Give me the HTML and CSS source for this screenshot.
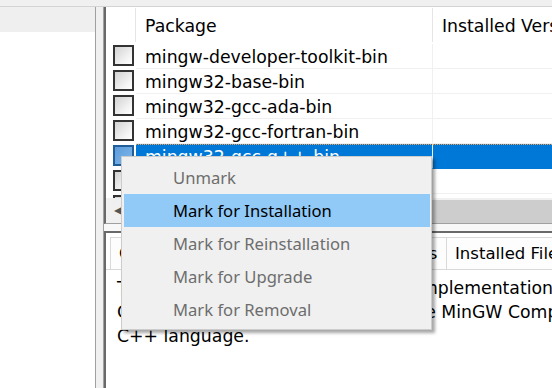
FILE: index.html
```html
<!DOCTYPE html>
<html>
<head>
<meta charset="utf-8">
<link rel="stylesheet" href="styles.css">
</head>
<body>
<div class="top"><span class="toplabel">Package</span></div>
<div class="main">
  <div class="left"><div class="leftsel"></div></div>
  <div class="vsplit"></div>
  <div class="right">
    <div class="list">
      <div class="hdr">
        <div class="c0"></div>
        <div class="c1">Package</div>
        <div class="c2">Installed Version</div>
      </div>
      <div class="rows">
        <div class="row"><div class="c0"><span class="cb"></span></div><div class="c1">mingw-developer-toolkit-bin</div><div class="c2"></div></div>
        <div class="row"><div class="c0"><span class="cb"></span></div><div class="c1">mingw32-base-bin</div><div class="c2"></div></div>
        <div class="row"><div class="c0"><span class="cb"></span></div><div class="c1">mingw32-gcc-ada-bin</div><div class="c2"></div></div>
        <div class="row"><div class="c0"><span class="cb"></span></div><div class="c1">mingw32-gcc-fortran-bin</div><div class="c2"></div></div>
        <div class="row sel"><div class="c0"><span class="cb"></span></div><div class="c1">mingw32-gcc-g++-bin</div><div class="c2"></div></div>
        <div class="row"><div class="c0"><span class="cb"></span></div><div class="c1">mingw32-gcc-objc-bin</div><div class="c2"></div></div>
        <div class="row"><div class="c0"><span class="cb"></span></div><div class="c1">msys-base-bin</div><div class="c2"></div></div>
      </div>
      <div class="hscroll"><div class="arrow">&#9664;</div><div class="thumb"></div></div>
    </div>
    <div class="hsplit"></div>
    <div class="details">
      <div class="tabs">
        <div class="tab t1">General</div>
        <div class="tab t2">Description</div>
        <div class="tab t3">Dependencies</div>
        <div class="tab t4">Installed Files</div>
        <div class="tab t5">Versions</div>
      </div>
      <div class="desc">This package provides the MinGW implementation of the<br>GNU C++ compilers, as a part of the MinGW Compiler Suite, for the<br>C++ language.</div>
    </div>
  </div>
</div>
<div class="menu">
  <div class="mi dis">Unmark</div>
  <div class="mi hot">Mark for Installation</div>
  <div class="mi dis">Mark for Reinstallation</div>
  <div class="mi dis">Mark for Upgrade</div>
  <div class="mi dis">Mark for Removal</div>
</div>
</body>
</html>
```

FILE: styles.css
```css
html, body {
  margin: 0;
  padding: 0;
}
body {
  width: 552px;
  height: 388px;
  overflow: hidden;
  background: #f0f0f0;
  font-family: "DejaVu Sans", sans-serif;
  font-size: 17.3px;
  color: #000;
  position: relative;
}
.top {
  height: 6px;
  overflow: hidden;
  background: #f0f0f0;
  border-bottom: 1px solid #d4d4d4;
}
.toplabel {
  display: block;
  font-size: 15px;
  line-height: 18px;
  margin-top: -17px;
  padding-left: 30px;
  white-space: nowrap;
}
.main {
  display: flex;
  height: 381px;
}
.left {
  width: 95px;
  flex: none;
  background: #fff;
  border-right: 1px solid #a0a0a0;
}
.leftsel {
  height: 25px;
  background: #efefef;
}
.vsplit {
  width: 7px;
  flex: none;
  background: #f0f0f0;
}
.right {
  flex: 1;
  display: flex;
  flex-direction: column;
  border-left: 1px solid #a0a0a0;
  min-width: 0;
  overflow: hidden;
}
.list {
  height: 216px;
  flex: none;
  border-left: 2px solid #696969;
  border-bottom: 1px solid #a0a0a0;
  background: #fff;
  display: flex;
  flex-direction: column;
  overflow: hidden;
}
.hdr {
  height: 37px;
  display: flex;
  flex: none;
  overflow: hidden;
}
.hdr .c0 {
  width: 29px;
  flex: none;
  border-right: 1px solid #e5e5e5;
  margin: 1px 0 2px;
}
.hdr .c1 {
  width: 297px;
  flex: none;
  padding: 2px 0 0 9px;
  box-sizing: border-box;
  border-right: 1px solid #e5e5e5;
  margin: 1px 0 2px;
  line-height: 32px;
}
.hdr .c2 {
  flex: none;
  padding: 2px 0 0 9px;
  line-height: 32px;
  margin: 1px 0 2px;
  white-space: nowrap;
}
.rows {
  flex: 1;
  overflow: hidden;
}
.row {
  display: flex;
  height: 25px;
}
.row .c0 {
  width: 30px;
  flex: none;
}
.row .c1 {
  width: 297px;
  height: 25px;
  flex: none;
  box-sizing: border-box;
  padding: 1px 0 0 9px;
  line-height: 24px;
  border-bottom: 1px solid #f0f0f0;
  border-right: 1px solid #f0f0f0;
  white-space: nowrap;
  overflow: hidden;
}
.row .c2 {
  flex: 1;
  border-bottom: 1px solid #f0f0f0;
}
.cb {
  display: block;
  width: 17px;
  height: 17px;
  margin: 1px 0 0 7px;
  border: 2px solid #333;
  background: linear-gradient(135deg, #d2d2d2, #f4f4f4 70%, #fff);
}
.row.sel .c1,
.row.sel .c2 {
  background: #0078d7;
  color: #fff;
  border-top: 1px dotted #f0a050;
  border-bottom-color: #0078d7;
}
.row.sel .c1 {
  padding-top: 0;
}
.row.sel .cb {
  border-color: #1f5e98;
  background: linear-gradient(135deg, #5d9ddb, #7fb6ea);
}
.hscroll {
  height: 25px;
  flex: none;
  display: flex;
  background: #f0f0f0;
}
.arrow {
  width: 22px;
  padding-left: 3px;
  box-sizing: border-box;
  text-align: center;
  font-size: 12px;
  line-height: 25px;
  color: #555;
}
.thumb {
  flex: 1;
  background: #cdcdcd;
  margin: 2px 0 0 3px;
}
.hsplit {
  height: 7px;
  flex: none;
  background: #f8f8f8;
}
.details {
  flex: 1;
  border-left: 2px solid #696969;
  border-top: 2px solid #696969;
  background: #fff;
}
.tabs {
  display: flex;
  padding: 4px 0 0 4px;
  border-bottom: 1px solid #d9d9d9;
  height: 32px;
  white-space: nowrap;
  font-size: 16.5px;
}
.tab {
  box-sizing: border-box;
  height: 32px;
  border: 1px solid #d9d9d9;
  border-bottom: none;
  border-left: none;
  background: #fdfdfd;
  padding: 0 8px;
  line-height: 31px;
  flex: none;
}
.t1 { width: 90px; border-left: 1px solid #d9d9d9; }
.t2 { width: 112px; }
.t3 { width: 135px; }
.t4 { width: 150px; }
.desc {
  padding: 6px 0 0 11px;
  line-height: 24px;
  white-space: nowrap;
}
.menu {
  position: absolute;
  left: 121px;
  top: 156px;
  width: 311px;
  height: 174px;
  box-sizing: border-box;
  padding: 4px 1px 0 2px;
  background: #f0f0f0;
  border: 1px solid #cccccc;
  box-shadow: 3px 3px 3px rgba(0, 0, 0, 0.35);
  font-family: "Noto Sans", sans-serif;
  font-size: 16.6px;
}
.mi {
  height: 33px;
  box-sizing: border-box;
  line-height: 31px;
  padding-left: 48px;
  border: 1px solid transparent;
  white-space: nowrap;
}
.mi.dis {
  color: #6d6d6d;
}
.mi.hot {
  background: #91c9f7;
  border-color: #91c9f7;
}
```
